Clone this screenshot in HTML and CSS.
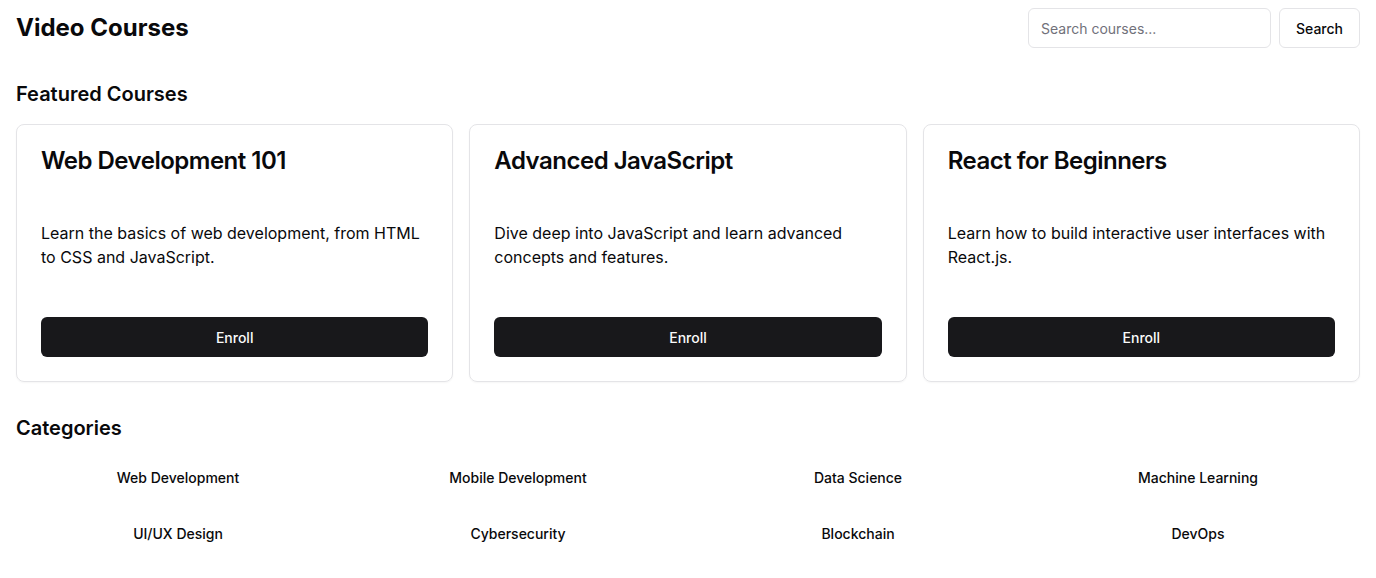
FILE: index.html
```html
<!DOCTYPE html>
<html>
<head>
<meta charset="utf-8">
<link rel="stylesheet" href="styles.css">
</head>
<body>
<div class="page">
  <header class="topbar">
    <h1 class="title">Video Courses</h1>
    <div class="search">
      <input class="search-input" type="text" placeholder="Search courses...">
      <button class="btn-outline">Search</button>
    </div>
  </header>

  <section class="section">
    <h2 class="section-title">Featured Courses</h2>
    <div class="cards">
      <div class="card">
        <h3 class="card-title">Web Development 101</h3>
        <p class="card-desc">Learn the basics of web development, from HTML to CSS and JavaScript.</p>
        <button class="btn-primary">Enroll</button>
      </div>
      <div class="card">
        <h3 class="card-title">Advanced JavaScript</h3>
        <p class="card-desc">Dive deep into JavaScript and learn advanced concepts and features.</p>
        <button class="btn-primary">Enroll</button>
      </div>
      <div class="card">
        <h3 class="card-title">React for Beginners</h3>
        <p class="card-desc">Learn how to build interactive user interfaces with React.js.</p>
        <button class="btn-primary">Enroll</button>
      </div>
    </div>
  </section>

  <section class="section">
    <h2 class="section-title">Categories</h2>
    <div class="categories">
      <button class="cat">Web Development</button>
      <button class="cat">Mobile Development</button>
      <button class="cat">Data Science</button>
      <button class="cat">Machine Learning</button>
      <button class="cat">UI/UX Design</button>
      <button class="cat">Cybersecurity</button>
      <button class="cat">Blockchain</button>
      <button class="cat">DevOps</button>
    </div>
  </section>
</div>
</body>
</html>
```

FILE: styles.css
```css
* { box-sizing: border-box; }
html, body { margin: 0; padding: 0; background: #fff; }
body {
  font-family: Inter, "Noto Sans", sans-serif;
  color: #09090b;
}
.page {
  padding: 8px 16px;
}
.topbar {
  display: flex;
  align-items: center;
  justify-content: space-between;
  height: 40px;
}
.title {
  margin: 0;
  font-size: 24px;
  line-height: 32px;
  font-weight: 700;
}
.search {
  display: flex;
  gap: 8px;
}
.search-input {
  width: 243px;
  height: 40px;
  border: 1px solid #e4e4e7;
  border-radius: 6px;
  padding: 0 12px;
  font-family: inherit;
  font-size: 14px;
  color: #09090b;
  outline: none;
}
.search-input::placeholder { color: #71717a; }
.btn-outline {
  width: 81px;
  height: 40px;
  border: 1px solid #e4e4e7;
  border-radius: 6px;
  background: #fff;
  font-family: inherit;
  font-size: 14px;
  font-weight: 500;
  color: #09090b;
}
.section { margin-top: 32px; }
.section-title {
  margin: 0 0 16px;
  font-size: 20px;
  line-height: 28px;
  font-weight: 600;
}
.cards {
  display: grid;
  grid-template-columns: repeat(3, 1fr);
  gap: 16px;
}
.card {
  border: 1px solid #e4e4e7;
  border-radius: 8px;
  padding: 24px;
  display: flex;
  flex-direction: column;
  box-shadow: 0 1px 2px rgba(0,0,0,0.04);
}
.card-title {
  margin: 0;
  font-size: 24px;
  line-height: 24px;
  font-weight: 600;
  letter-spacing: -0.5px;
}
.card-desc {
  margin: 48px 0 0;
  font-size: 16px;
  line-height: 24px;
  color: #09090b;
}
.btn-primary {
  margin-top: 48px;
  height: 40px;
  border: none;
  border-radius: 6px;
  background: #18181b;
  color: #fafafa;
  font-family: inherit;
  font-size: 14px;
  font-weight: 500;
}
.categories {
  display: grid;
  grid-template-columns: repeat(4, 1fr);
  gap: 16px;
  margin-top: -1px;
}
.cat {
  height: 40px;
  border: none;
  background: #fff;
  font-family: inherit;
  font-size: 14px;
  font-weight: 500;
  color: #09090b;
}
```
